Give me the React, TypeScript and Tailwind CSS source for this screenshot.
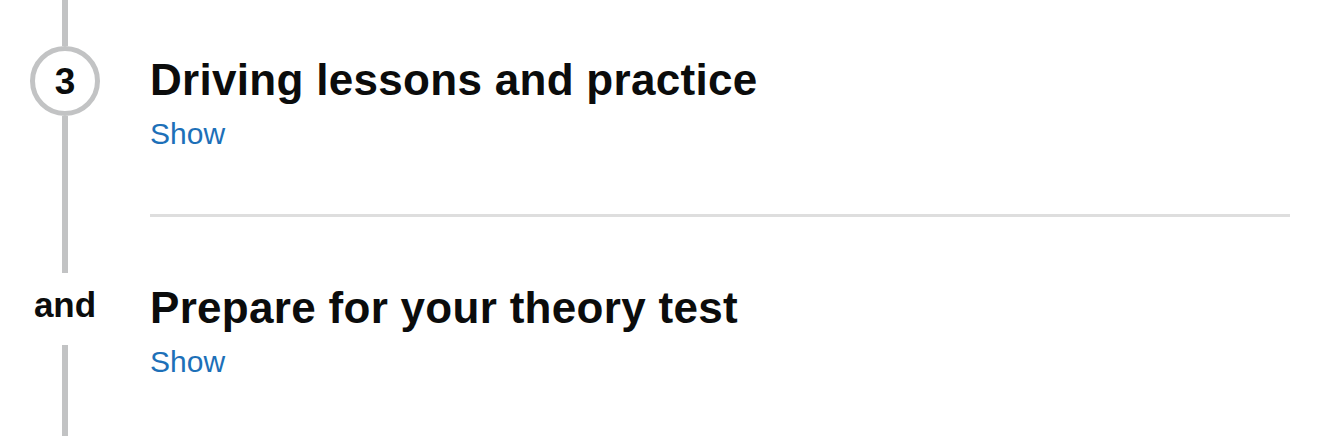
const font = { fontFamily: '"Liberation Sans", Arial, sans-serif' };

const Line = () => <div className="w-[6px] flex-1 bg-[#c2c3c4]" />;

const StepHeading = ({ title }: { title: string }) => (
  <>
    <h2 className="text-[44px] leading-[50px] font-bold text-[#0b0c0c] tracking-[0.3px]">
      {title}
    </h2>
    <a href="#" className="mt-[11px] block text-[30px] leading-[36px] text-[#1d70b8]">
      Show
    </a>
  </>
);

export default function App() {
  return (
    <div className="w-[1334px] h-[436px] overflow-hidden bg-white" style={font}>
      <div className="flex h-[273px]">
        <div className="w-[130px] flex flex-col items-center">
          <div className="w-[6px] h-[46px] bg-[#c2c3c4]" />
          <div className="w-[70px] h-[70px] rounded-full border-[5px] border-[#c2c3c4] flex items-center justify-center">
            <span className="text-[37px] leading-none font-bold text-[#0b0c0c]">3</span>
          </div>
          <Line />
        </div>
        <div className="ml-[20px] w-[1140px] pt-[55px]">
          <StepHeading title="Driving lessons and practice" />
          <div className="mt-[62px] h-[3px] bg-[#dedede]" />
        </div>
      </div>
      <div className="flex h-[163px]">
        <div className="w-[130px] flex flex-col items-center">
          <div className="h-[72px] pt-[12px]">
            <span className="block text-[35px] leading-[40px] font-bold text-[#0b0c0c]">and</span>
          </div>
          <Line />
        </div>
        <div className="ml-[20px] w-[1140px] pt-[10px]">
          <StepHeading title="Prepare for your theory test" />
        </div>
      </div>
    </div>
  );
}
